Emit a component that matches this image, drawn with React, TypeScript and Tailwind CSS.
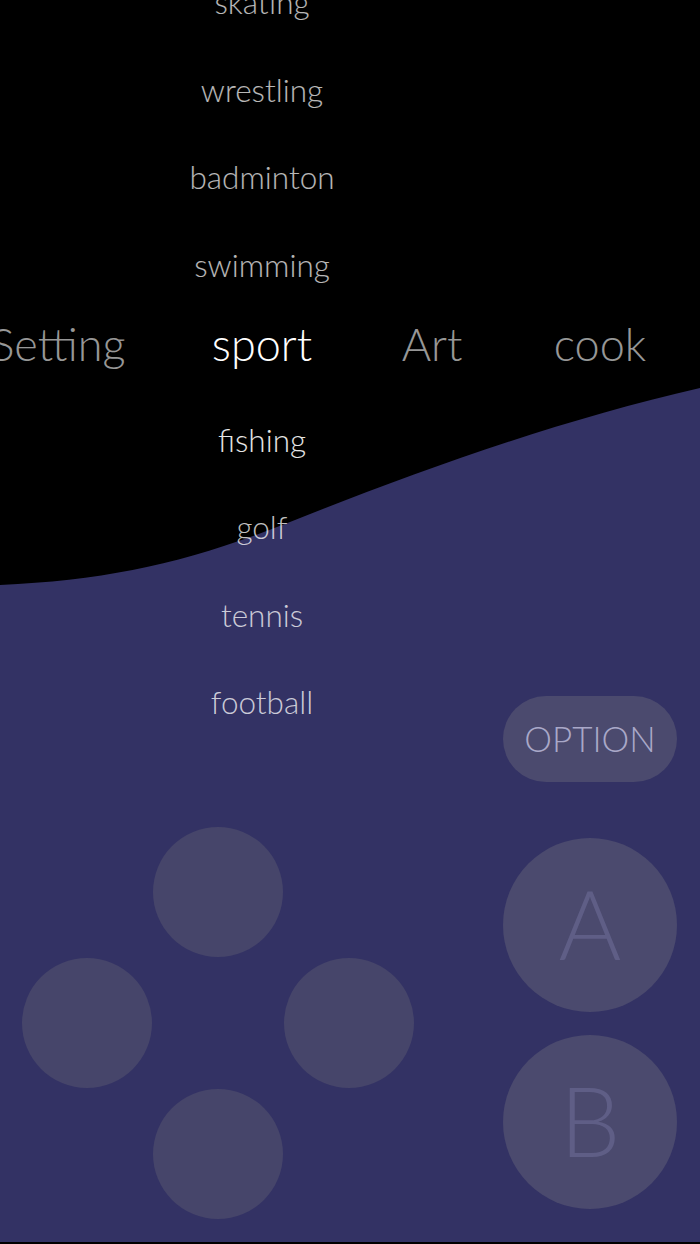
import React from "react";

const topItems = ["skating", "wrestling", "badminton", "swimming"];
const bottomItems = [
  { label: "fishing", tone: "text-white/90" },
  { label: "golf", tone: "text-white/75" },
  { label: "tennis", tone: "text-white/75" },
  { label: "football", tone: "text-white/75" },
];

const ListItem = ({ label, tone }: { label: string; tone: string }) => (
  <div className={`h-[87.5px] w-[524px] shrink-0 flex items-center justify-center text-[31.5px] ${tone}`}>
    {label}
  </div>
);

const Pad = ({ className = "" }: { className?: string }) => (
  <div className={`w-[130px] h-[130px] rounded-full bg-[#46456a] ${className}`} />
);

export default function App() {
  return (
    <div className="relative h-[1244px] w-[700px] overflow-hidden bg-black font-['Lato',sans-serif] font-light">
      {/* wave behind the menu */}
      <svg className="absolute inset-0" width="700" height="1242" viewBox="0 0 700 1242">
        <path
          d="M0 585 C 110 580 190 562 290 522 C 420 470 560 420 700 388 L 700 1242 L 0 1242 Z"
          fill="#333264"
        />
      </svg>

      <div className="relative flex flex-col">
        <div className="-mt-[41px] flex flex-col">
          {topItems.map((t) => (
            <ListItem key={t} label={t} tone="text-white/72" />
          ))}
        </div>

        {/* category row */}
        <div className="h-[87.5px] flex items-center -ml-[62px] whitespace-nowrap text-[45px] pb-[16px]">
          <div className="w-[240px] shrink-0 text-center text-white/60">Setting</div>
          <div className="w-[168px] shrink-0 text-center text-white">sport</div>
          <div className="w-[172px] shrink-0 text-center text-white/60">Art</div>
          <div className="w-[164px] shrink-0 text-center text-white/60">cook</div>
        </div>

        <div className="flex">
          <div className="w-[503px] shrink-0 flex flex-col">
            {bottomItems.map((i) => (
              <ListItem key={i.label} label={i.label} tone={i.tone} />
            ))}

            <div className="mt-[80px] ml-[22px] grid grid-cols-[131px_131px_131px] grid-rows-[131px_131px_131px] w-[393px]">
              <div />
              <Pad />
              <div />
              <Pad />
              <div />
              <Pad />
              <div />
              <Pad />
              <div />
            </div>
          </div>

          <div className="w-[174px] shrink-0 flex flex-col pt-[299px]">
            <div className="h-[86px] rounded-full bg-[#4b4a6e] flex items-center justify-center text-[35px] text-[#a9a8c8]">
              OPTION
            </div>
            <div className="mt-[56px] w-[174px] h-[174px] rounded-full bg-[#4b4a6e] flex items-center justify-center text-[96px] text-[#5f5e86] pb-[4px]">
              A
            </div>
            <div className="mt-[23px] w-[174px] h-[174px] rounded-full bg-[#4b4a6e] flex items-center justify-center text-[96px] text-[#5f5e86] pb-[4px]">
              B
            </div>
          </div>
        </div>
      </div>
    </div>
  );
}
